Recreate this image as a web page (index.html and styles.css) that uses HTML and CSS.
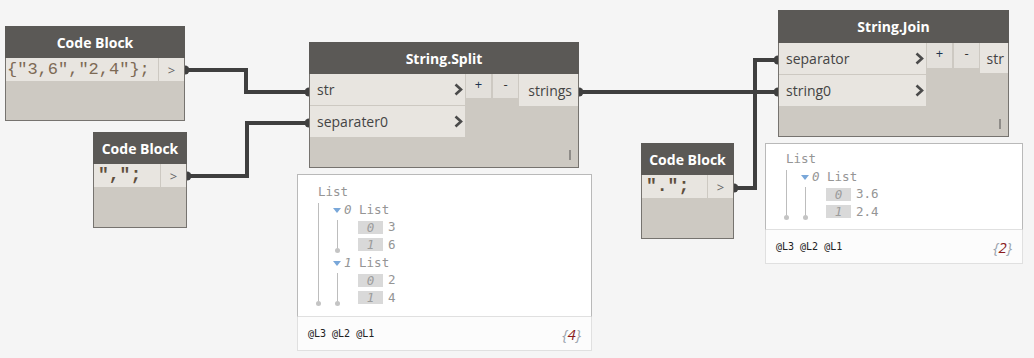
FILE: index.html
```html
<!DOCTYPE html>
<html lang="en">
<head>
  <meta charset="UTF-8" />
  <title>Dynamo graph</title>
  <link rel="stylesheet" href="styles.css">
</head>
<body>

<div class="canvas">

  <!-- wires -->
  <svg class="wires" width="1034" height="358" viewBox="0 0 1034 358">
    <g fill="none" stroke="#3f3f3f" stroke-width="4">
      <path d="M184 70 H246 V92 H309" />
      <path d="M186 176 H247 V123 H309" />
      <path d="M578 92 H778" />
      <path d="M733 188 H755 V60 H778" />
    </g>
    <g fill="#3f3f3f">
      <circle cx="185" cy="70" r="4.5" />
      <circle cx="187" cy="176" r="4.5" />
      <circle cx="309" cy="92" r="4.5" />
      <circle cx="309" cy="123" r="4.5" />
      <circle cx="579" cy="92" r="4.5" />
      <circle cx="778" cy="92" r="4.5" />
      <circle cx="778" cy="60" r="4.5" />
      <circle cx="734" cy="188" r="4.5" />
    </g>
  </svg>

  <!-- code blocks -->
  <div class="node code-block cb-values">
    <div class="node-head">Code Block</div>
    <div class="cb-row">
      <div class="cb-code">{"3,6","2,4"};</div>
      <div class="cb-out">&gt;</div>
    </div>
  </div>

  <div class="node code-block cb-comma">
    <div class="node-head">Code Block</div>
    <div class="cb-row">
      <div class="cb-code">",";</div>
      <div class="cb-out">&gt;</div>
    </div>
  </div>

  <div class="node code-block cb-dot">
    <div class="node-head">Code Block</div>
    <div class="cb-row">
      <div class="cb-code">".";</div>
      <div class="cb-out">&gt;</div>
    </div>
  </div>

  <!-- String.Split -->
  <div class="node fn split">
    <div class="node-head">String.Split</div>
    <div class="fn-body">
      <div class="ports-in">
        <div class="port-in">
          <span>str</span>
          <svg class="chev" width="9" height="13" viewBox="0 0 9 13"><path d="M1.5 1.5 L7 6.5 L1.5 11.5" /></svg>
        </div>
        <div class="port-in">
          <span>separater0</span>
          <svg class="chev" width="9" height="13" viewBox="0 0 9 13"><path d="M1.5 1.5 L7 6.5 L1.5 11.5" /></svg>
        </div>
      </div>
      <div class="port-btn plus">+</div>
      <div class="port-btn minus">-</div>
      <div class="port-out">strings</div>
    </div>
  </div>

  <!-- String.Join -->
  <div class="node fn join">
    <div class="node-head">String.Join</div>
    <div class="fn-body">
      <div class="ports-in">
        <div class="port-in">
          <span>separator</span>
          <svg class="chev" width="9" height="13" viewBox="0 0 9 13"><path d="M1.5 1.5 L7 6.5 L1.5 11.5" /></svg>
        </div>
        <div class="port-in">
          <span>string0</span>
          <svg class="chev" width="9" height="13" viewBox="0 0 9 13"><path d="M1.5 1.5 L7 6.5 L1.5 11.5" /></svg>
        </div>
      </div>
      <div class="port-btn plus">+</div>
      <div class="port-btn minus">-</div>
      <div class="port-out">str</div>
    </div>
  </div>

  <!-- previews -->
  <div class="preview preview-split">
    <div class="preview-main">
      <div class="tree">
        <div class="row">List</div>
        <div class="branch">
          <div class="row head"><i class="tri"></i><em>0</em> List</div>
          <div class="sub">
            <div class="row leaf"><span class="idx">0</span>3</div>
            <div class="row leaf"><span class="idx">1</span>6</div>
          </div>
          <div class="row head"><i class="tri"></i><em>1</em> List</div>
          <div class="sub">
            <div class="row leaf"><span class="idx">0</span>2</div>
            <div class="row leaf"><span class="idx">1</span>4</div>
          </div>
        </div>
      </div>
    </div>
    <div class="preview-foot">
      <span class="levels">@L3 @L2 @L1</span>
      <span class="count">{<b>4</b>}</span>
    </div>
  </div>

  <div class="preview preview-join">
    <div class="preview-main">
      <div class="tree">
        <div class="row">List</div>
        <div class="branch">
          <div class="row head"><i class="tri"></i><em>0</em> List</div>
          <div class="sub">
            <div class="row leaf"><span class="idx">0</span>3.6</div>
            <div class="row leaf"><span class="idx">1</span>2.4</div>
          </div>
        </div>
      </div>
    </div>
    <div class="preview-foot">
      <span class="levels">@L3 @L2 @L1</span>
      <span class="count">{<b>2</b>}</span>
    </div>
  </div>

</div>

</body>
</html>
```

FILE: styles.css
```css
body {
  margin: 0;
  padding: 0;
  background: #f5f5f5;
  font-family: "Open Sans", "Noto Sans", sans-serif;
}

.canvas {
  position: relative;
  width: 1034px;
  height: 358px;
  overflow: hidden;
}

.wires {
  position: absolute;
  left: 0;
  top: 0;
}

/* nodes */

.node {
  position: absolute;
  box-sizing: border-box;
  background: #cdc9c2;
  border: 1px solid #76736f;
}

.node-head {
  background: #5b5956;
  color: #fff;
  font-weight: bold;
  font-size: 14px;
  height: 32px;
  margin: -1px -1px 0 -1px;
  display: flex;
  align-items: center;
  justify-content: center;
}

.cb-values { left: 5px;   top: 26px;  width: 180px; height: 95px; }
.cb-comma  { left: 93px;  top: 132px; width: 94px;  height: 96px; }
.cb-dot    { left: 641px; top: 143px; width: 93px;  height: 96px; }
.split     { left: 309px; top: 42px;  width: 270px; height: 126px; }
.join      { left: 778px; top: 10px;  width: 231px; height: 127px; }

.join .node-head {
  height: 33px;
}

/* code block */

.cb-row {
  display: flex;
  height: 23px;
  gap: 1px;
}

.cb-code {
  flex: 1;
  background: #e8e5e0;
  font-family: "Liberation Mono", "DejaVu Sans Mono", monospace;
  font-size: 17px;
  line-height: 23px;
  color: #7d6a55;
  padding-left: 1px;
  white-space: pre;
  overflow: hidden;
}

.cb-comma .cb-code,
.cb-dot .cb-code {
  font-size: 18px;
  padding-left: 4px;
  font-weight: bold;
  color: #5e4e3c;
}

.cb-out {
  width: 25px;
  background: #e8e5e0;
  color: #666;
  font-size: 13px;
  display: flex;
  align-items: center;
  justify-content: center;
}

/* function nodes */

.fn-body {
  display: flex;
  align-items: flex-start;
}

.ports-in {
  width: 155px;
}

.join .ports-in {
  width: 147px;
}

.port-in {
  height: 31px;
  margin-bottom: 1px;
  background: #e8e5e0;
  display: flex;
  align-items: center;
  justify-content: space-between;
  padding: 0 2px 0 7px;
  font-size: 14px;
  color: #444;
}

.chev path {
  fill: none;
  stroke: #4a4a4a;
  stroke-width: 2.6;
}

.port-btn {
  width: 25px;
  height: 24px;
  margin-left: 1px;
  background: #e3e0db;
  font-size: 13px;
  text-align: center;
  line-height: 20px;
  color: #333;
}

.port-btn.plus {
  color: #1c3550;
}

.join .port-btn {
  height: 25px;
}

.port-btn.minus {
  margin-left: 2px;
}

.port-out {
  flex: 1;
  height: 32px;
  margin-left: 1px;
  background: #e8e5e0;
  font-size: 14px;
  color: #444;
  display: flex;
  align-items: center;
  justify-content: flex-end;
  padding-right: 6px;
}

.join .port-out {
  height: 30px;
  padding-right: 4px;
}

.fn::after {
  content: "";
  position: absolute;
  right: 7px;
  bottom: 7px;
  width: 2px;
  height: 10px;
  background: #8f8c88;
}

/* previews */

.preview {
  position: absolute;
  box-sizing: border-box;
  display: flex;
  flex-direction: column;
}

.preview-split { left: 297px; top: 174px; width: 295px; height: 177px; }
.preview-join  { left: 765px; top: 143px; width: 258px; height: 121px; }

.preview-main {
  flex: 1;
  background: #fff;
  border: 1px solid #b9b9b9;
  border-bottom-color: #e0e0e0;
}

.preview-foot {
  height: 33px;
  background: #fcfcfc;
  border: 1px solid #e0e0e0;
  border-top: none;
  display: flex;
  align-items: center;
  justify-content: space-between;
  padding: 0 10px 0 10px;
}

.levels {
  font-family: "DejaVu Sans Mono", monospace;
  font-size: 10px;
  color: #222;
}

.count {
  font-size: 15px;
  font-style: italic;
  color: #9aa3ad;
}

.count b {
  font-weight: normal;
  color: #8b1c1c;
}

.tree {
  padding: 8px 0 0 20px;
  font-family: "DejaVu Sans Mono", monospace;
  font-size: 12.5px;
  color: #959595;
}

.preview-join .tree {
  padding-top: 6px;
}

.row {
  height: 17.7px;
  line-height: 17.7px;
  display: flex;
  align-items: center;
  white-space: pre;
}

.branch,
.sub {
  position: relative;
}

.branch::before,
.sub::before {
  content: "";
  position: absolute;
  left: 0;
  top: 2px;
  bottom: 4px;
  width: 1px;
  background: #bdbdbd;
}

.branch::after,
.sub::after {
  content: "";
  position: absolute;
  left: -2px;
  bottom: 1px;
  width: 5px;
  height: 5px;
  border-radius: 50%;
  background: #c4c4c4;
}

.head {
  padding-left: 15px;
}

.tri {
  width: 0;
  height: 0;
  border-left: 4px solid transparent;
  border-right: 4px solid transparent;
  border-top: 5px solid #79a7d9;
  margin: 2px 3px 0 0;
}

.head em {
  font-style: italic;
}

.sub {
  margin-left: 19px;
}

.leaf {
  padding-left: 21px;
}

.idx {
  width: 25px;
  height: 13px;
  line-height: 13px;
  background: #d9d9d9;
  text-align: center;
  font-style: italic;
  color: #9c9c9c;
  margin-right: 5px;
}
```
